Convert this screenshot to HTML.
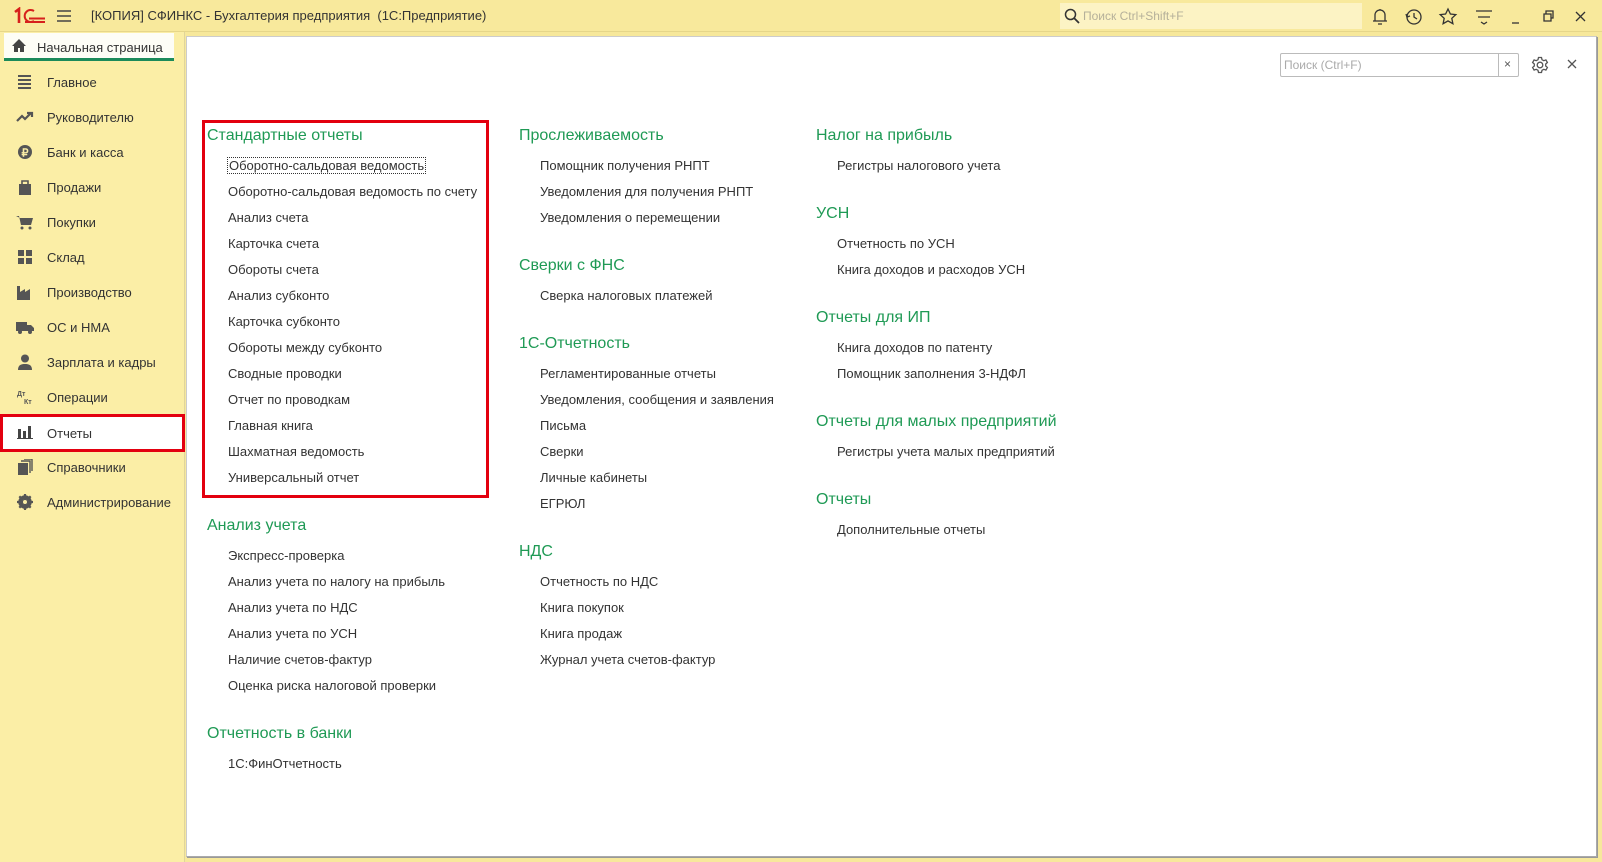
<!DOCTYPE html>
<html><head><meta charset="utf-8"><style>
*{margin:0;padding:0;box-sizing:border-box}
body{width:1602px;height:862px;overflow:hidden;background:#f7e89b;font-family:"Liberation Sans",Arial,sans-serif;color:#333;position:relative}
.abs{position:absolute}
#title{left:0;top:0;width:1602px;height:32px;background:#f8e99c;border-bottom:1px solid #e6d68a}
#title .t{left:91px;top:8px;font-size:13px;color:#333}
#side{left:0;top:32px;width:185px;height:830px;background:#fbeea6;border-right:1px solid #e0d59c}
.tab{left:4px;top:33px;width:170px;height:28px;background:#fdfdf6;font-size:13px}
.tab span{position:absolute;left:33px;top:7px}
.tab i{position:absolute;left:0;right:0;bottom:0;height:3px;background:#1b8a5a}
.nav{position:absolute;left:0;width:185px;height:35px;font-size:13px}
.nav span{position:absolute;left:47px;top:10px}
.nav svg{position:absolute;left:16px;top:9px}
#panel{left:186px;top:36px;width:1411px;height:821px;background:#fff;border:1px solid #aaa;border-top-color:#ccc;border-left-color:#ccc;box-shadow:1px 1px 0 #999}
.col{position:absolute;top:119px}
.col h{display:block;height:34px;line-height:34px;font-size:16px;color:#1f9a55}
.col a{display:block;height:26px;line-height:26px;font-size:13px;padding-left:21px;color:#333;text-decoration:none;white-space:nowrap}
.col .g{margin-bottom:18px}
.red{border:3px solid #e3000f}
</style></head><body>
<div id="title" class="abs">
 <svg class="abs" style="left:12px;top:7px" width="34" height="18" viewBox="0 0 34 18"><path d="M3 5l4-3v14" stroke="#d6201c" stroke-width="2.6" fill="none"/><path d="M22 4a6 6 0 1 0 0 10M13 15h20M17 11.5h16" stroke="#d6201c" stroke-width="2" fill="none"/></svg>
 <svg class="abs" style="left:56px;top:9px" width="16" height="14"><path d="M1 2h14M1 7h14M1 12h14" stroke="#444" stroke-width="1.5"/></svg>
 <div class="abs t">[КОПИЯ] СФИНКС - Бухгалтерия предприятия&nbsp; (1С:Предприятие)</div>
 <div class="abs" style="left:1060px;top:3px;width:302px;height:26px;background:#fcf3c4"></div>
 <svg class="abs" style="left:1064px;top:8px" width="16" height="16"><circle cx="6.5" cy="6.5" r="5" stroke="#333" stroke-width="1.5" fill="none"/><path d="M10 10l5 5" stroke="#333" stroke-width="1.8"/></svg>
 <div class="abs" style="left:1083px;top:9px;font-size:12px;color:#b5b09a">Поиск Ctrl+Shift+F</div>
 <svg class="abs" style="left:1370px;top:6px" width="220" height="22" fill="none" stroke="#333" stroke-width="1.3">
  <path d="M3 15h14M5 15V9a5 5 0 0 1 10 0v6M8 18h4M10 3v1"/>
  <circle cx="44" cy="11" r="7"/><path d="M44 7v4l3 2M36 8l1 3 3-1"/>
  <path d="M78 3l2.4 5 5.4.6-4 3.7 1.1 5.4-4.9-2.8-4.9 2.8 1.1-5.4-4-3.7 5.4-.6z"/>
  <path d="M106 5h16M108 11h12M111 16l3 2 3-2"/>
  <path d="M142 17h7"/>
  <path d="M174 8h7v7h-7zM176 8V5h7v7h-2"/>
  <path d="M206 6l9 9M215 6l-9 9"/>
 </svg>
</div>
<div id="side" class="abs"></div>
<div class="abs tab"><svg style="position:absolute;left:8px;top:6px" width="14" height="13"><path d="M7 0L0 7h2v6h4V9h2v4h4V7h2z" fill="#444"/></svg><span>Начальная страница</span><i></i></div>
<div class="abs" style="left:0;top:65px">
 <div class="nav" style="top:0"><svg width="18" height="16"><path d="M2 2h13M2 6h13M2 10h13M2 14h13" stroke="#555" stroke-width="2"/></svg><span>Главное</span></div>
 <div class="nav" style="top:35px"><svg width="18" height="16"><path d="M1 12l5-5 3 3 6-6M11 4h5v4" stroke="#555" stroke-width="2.2" fill="none"/></svg><span>Руководителю</span></div>
 <div class="nav" style="top:70px"><svg width="18" height="16"><circle cx="9" cy="8" r="7" fill="#555"/><text x="5.5" y="12.5" font-size="11" font-weight="bold" fill="#fbeea6" font-family="Liberation Sans">₽</text></svg><span>Банк и касса</span></div>
 <div class="nav" style="top:105px"><svg width="18" height="16"><path d="M3 5h12v11H3z" fill="#555"/><path d="M6 6V2h6v4" stroke="#555" stroke-width="1.6" fill="none"/></svg><span>Продажи</span></div>
 <div class="nav" style="top:140px"><svg width="18" height="16"><path d="M0 2h3l2 9h10l2-7H4" fill="#555"/><circle cx="6" cy="14" r="1.5" fill="#555"/><circle cx="14" cy="14" r="1.5" fill="#555"/></svg><span>Покупки</span></div>
 <div class="nav" style="top:175px"><svg width="18" height="16"><path d="M2 1h6v6H2zM10 1h6v6h-6zM2 9h6v6H2zM10 9h6v6h-6z" fill="#555"/></svg><span>Склад</span></div>
 <div class="nav" style="top:210px"><svg width="18" height="16"><path d="M1 16V2h3v6l5-3v3l5-3v11z" fill="#555"/></svg><span>Производство</span></div>
 <div class="nav" style="top:245px"><svg width="18" height="16"><path d="M0 3h11v9H0zM11 6h4l3 3v3h-7z" fill="#555"/><circle cx="4" cy="13" r="2" fill="#555"/><circle cx="14" cy="13" r="2" fill="#555"/></svg><span>ОС и НМА</span></div>
 <div class="nav" style="top:280px"><svg width="18" height="16"><circle cx="9" cy="4.5" r="4" fill="#555"/><path d="M2 16c0-5 3-6 7-6s7 1 7 6z" fill="#555"/></svg><span>Зарплата и кадры</span></div>
 <div class="nav" style="top:315px"><svg width="18" height="16"><text x="1" y="7" font-size="7" fill="#555" font-family="Liberation Sans" font-weight="bold">Дт</text><text x="8" y="15" font-size="7" fill="#555" font-family="Liberation Sans" font-weight="bold">Кт</text></svg><span>Операции</span></div>
 <div class="nav red" style="top:349px;background:#fff;height:38px"><svg width="18" height="16" style="left:13px;top:7px"><path d="M2 5h3v9H2zM7 7h3v7H7zM12 2h3v12h-3zM1 14h16v1H1z" fill="#444"/></svg><span style="left:44px;top:9px">Отчеты</span></div>
 <div class="nav" style="top:385px"><svg width="18" height="16"><path d="M2 4h10v12H2z" fill="#555"/><path d="M5 2h9v12M8 0h8v12" stroke="#555" stroke-width="1.4" fill="none"/></svg><span>Справочники</span></div>
 <div class="nav" style="top:420px"><svg width="18" height="16"><circle cx="9" cy="8" r="5" stroke="#555" stroke-width="3.5" fill="none"/><path d="M9 0v16M1 8h16M3.3 2.3l11.4 11.4M14.7 2.3L3.3 13.7" stroke="#555" stroke-width="2.2"/><circle cx="9" cy="8" r="2" fill="#fbeea6"/></svg><span>Администрирование</span></div>
</div>
<div id="panel" class="abs"></div>
<div class="abs" style="left:1280px;top:53px;width:239px;height:24px;border:1px solid #bbb;background:#fff;border-radius:2px"><span style="position:absolute;left:3px;top:4px;font-size:12px;color:#aaa">Поиск (Ctrl+F)</span><div style="position:absolute;left:217px;top:0;width:1px;height:22px;background:#bbb"></div><span style="position:absolute;left:223px;top:3px;font-size:12px;color:#555">×</span></div>
<svg class="abs" style="left:1531px;top:56px" width="18" height="18" fill="none" stroke="#555" stroke-width="1.3"><circle cx="9" cy="9" r="2.8"/><path d="M7.5 1.5h3l.5 2.2 1.8 1 2.1-.8 1.5 2.6-1.7 1.5v2l1.7 1.5-1.5 2.6-2.1-.8-1.8 1-.5 2.2h-3l-.5-2.2-1.8-1-2.1.8-1.5-2.6 1.7-1.5v-2L1.6 6.5l1.5-2.6 2.1.8 1.8-1z"/></svg>
<svg class="abs" style="left:1567px;top:59px" width="10" height="10"><path d="M1 1l8 8M9 1l-8 8" stroke="#555" stroke-width="1.3"/></svg>
<div class="abs red" style="left:202px;top:120px;width:287px;height:378px"></div>
<div class="col" style="left:207px">
 <div class="g"><h>Стандартные отчеты</h>
 <a><span style="outline:1px dotted #333;padding:0 1px">Оборотно-сальдовая ведомость</span></a><a>Оборотно-сальдовая ведомость по счету</a><a>Анализ счета</a><a>Карточка счета</a><a>Обороты счета</a><a>Анализ субконто</a><a>Карточка субконто</a><a>Обороты между субконто</a><a>Сводные проводки</a><a>Отчет по проводкам</a><a>Главная книга</a><a>Шахматная ведомость</a><a>Универсальный отчет</a></div>
 <div class="g"><h>Анализ учета</h><a>Экспресс-проверка</a><a>Анализ учета по налогу на прибыль</a><a>Анализ учета по НДС</a><a>Анализ учета по УСН</a><a>Наличие счетов-фактур</a><a>Оценка риска налоговой проверки</a></div>
 <div class="g"><h>Отчетность в банки</h><a>1С:ФинОтчетность</a></div>
</div>
<div class="col" style="left:519px">
 <div class="g"><h>Прослеживаемость</h><a>Помощник получения РНПТ</a><a>Уведомления для получения РНПТ</a><a>Уведомления о перемещении</a></div>
 <div class="g"><h>Сверки с ФНС</h><a>Сверка налоговых платежей</a></div>
 <div class="g"><h>1С-Отчетность</h><a>Регламентированные отчеты</a><a>Уведомления, сообщения и заявления</a><a>Письма</a><a>Сверки</a><a>Личные кабинеты</a><a>ЕГРЮЛ</a></div>
 <div class="g"><h>НДС</h><a>Отчетность по НДС</a><a>Книга покупок</a><a>Книга продаж</a><a>Журнал учета счетов-фактур</a></div>
</div>
<div class="col" style="left:816px">
 <div class="g"><h>Налог на прибыль</h><a>Регистры налогового учета</a></div>
 <div class="g"><h>УСН</h><a>Отчетность по УСН</a><a>Книга доходов и расходов УСН</a></div>
 <div class="g"><h>Отчеты для ИП</h><a>Книга доходов по патенту</a><a>Помощник заполнения 3-НДФЛ</a></div>
 <div class="g"><h>Отчеты для малых предприятий</h><a>Регистры учета малых предприятий</a></div>
 <div class="g"><h>Отчеты</h><a>Дополнительные отчеты</a></div>
</div>
</body></html>
